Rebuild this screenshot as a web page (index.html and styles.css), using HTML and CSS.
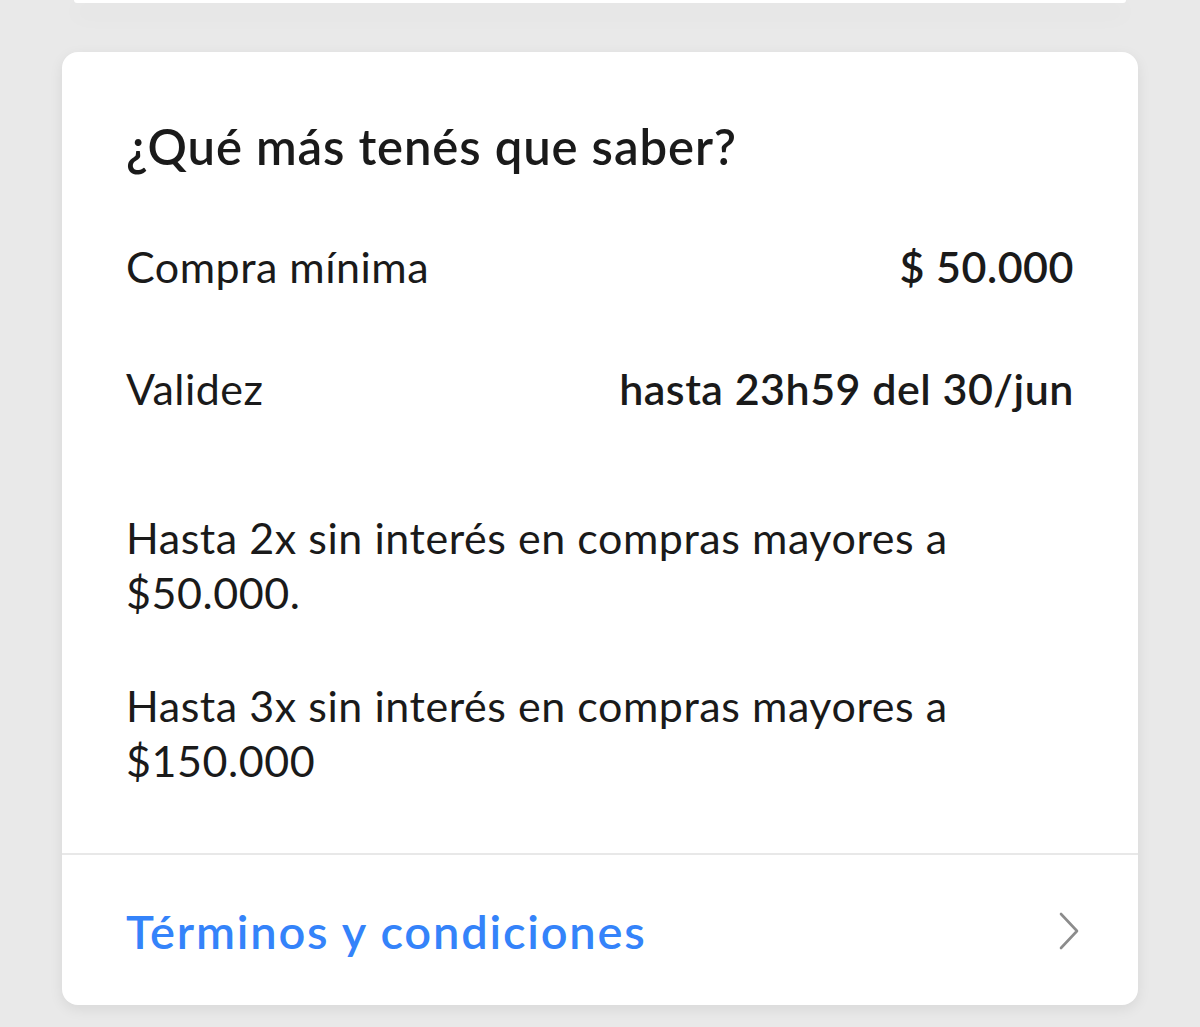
FILE: index.html
```html
<!DOCTYPE html>
<html lang="es">
<head>
<meta charset="utf-8">
<title>¿Qué más tenés que saber?</title>
<link rel="stylesheet" href="styles.css">
</head>
<body>
<div class="prev-card"></div>
<section class="card">
  <div class="card-body">
    <h2 class="title">¿Qué más tenés que saber?</h2>
    <div class="rows">
      <div class="row"><span class="label">Compra mínima</span><span class="value">$ 50.000</span></div>
      <div class="row"><span class="label">Validez</span><span class="value">hasta 23h59 del 30/jun</span></div>
    </div>
    <p class="note note-first">Hasta 2x sin interés en compras mayores a $50.000.</p>
    <p class="note">Hasta 3x sin interés en compras mayores a $150.000</p>
  </div>
  <a class="terms" href="#">
    <span class="terms-text">Términos y condiciones</span>
    <svg class="chevron" width="22" height="38" viewBox="0 0 22 38" aria-hidden="true">
      <path d="M3 2 L19 19 L3 36" fill="none" stroke="#8c8c8c" stroke-width="2.6" stroke-linecap="round" stroke-linejoin="round"/>
    </svg>
  </a>
</section>
</body>
</html>
```
FILE: styles.css
```css
* { box-sizing: border-box; }
html, body { margin: 0; padding: 0; }
body {
  background: #e9e9e9;
  font-family: "Lato", "Open Sans", sans-serif;
  color: #1a1a1a;
  height: 1027px;
  overflow: hidden;
}
.prev-card {
  height: 3px;
  margin: 0 74px;
  background: #ffffff;
  border-radius: 0 0 14px 14px;
  box-shadow: 0 10px 22px rgba(0, 0, 0, 0.10);
}
.card {
  margin: 49px 62px 0;
  background: #ffffff;
  border-radius: 16px;
  box-shadow: 0 4px 14px rgba(0, 0, 0, 0.08);
  overflow: hidden;
}
.card-body {
  padding: 64px 64px 65px;
  border-bottom: 2px solid #e8e8e8;
}
.title {
  margin: 0 0 63px;
  font-size: 49px;
  line-height: 60px;
  font-weight: 600;
  letter-spacing: 0.9px;
}
.rows {
  display: flex;
  flex-direction: column;
  gap: 67px;
}
.row {
  display: flex;
  justify-content: space-between;
  align-items: baseline;
  font-size: 43px;
  line-height: 55px;
  letter-spacing: 0.5px;
}
.value { font-weight: 600; }
.note {
  margin: 58px 0 0;
  font-size: 43px;
  line-height: 55px;
  letter-spacing: 0.55px;
}
.note-first { margin-top: 94px; }
.terms {
  display: flex;
  justify-content: space-between;
  align-items: center;
  padding: 46px 58px 44px 64px;
  text-decoration: none;
}
.terms-text {
  font-size: 47px;
  line-height: 60px;
  font-weight: 600;
  letter-spacing: 1.8px;
  color: #3483fa;
}
.chevron { display: block; }
```
